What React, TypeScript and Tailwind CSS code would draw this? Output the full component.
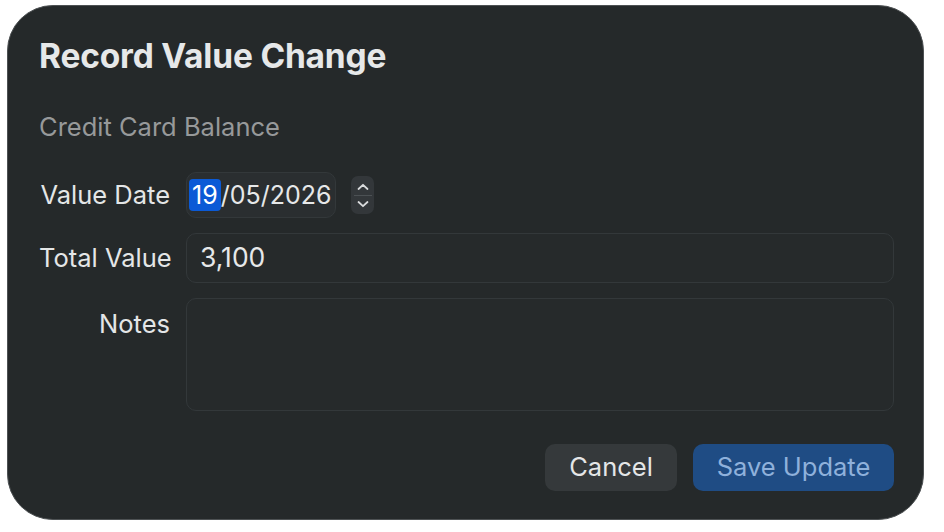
function DateStepper() {
  return (
    <div className="flex h-[38px] w-[23px] flex-col items-center justify-center rounded-[7px] bg-[#33373a] text-[#d9dbdc]">
      <svg width="14" height="10" viewBox="0 0 14 10" fill="none" stroke="currentColor" strokeWidth="1.8" strokeLinecap="round" strokeLinejoin="round">
        <path d="M2.5 7 7 2.8 11.5 7" />
      </svg>
      <div className="my-[3px] h-px w-[18px] bg-[#4c5154]" />
      <svg width="14" height="10" viewBox="0 0 14 10" fill="none" stroke="currentColor" strokeWidth="1.8" strokeLinecap="round" strokeLinejoin="round">
        <path d="M2.5 3 7 7.2 11.5 3" />
      </svg>
    </div>
  )
}

export default function App() {
  return (
    <div
      className="h-[532px] w-[944px] bg-white pl-[7px] pt-[5px]"
      style={{ fontFamily: 'Inter, "Noto Sans", sans-serif' }}
    >
      <section className="flex h-[515px] w-[917px] flex-col rounded-[46px] border border-[#4d5153] bg-[#25292a] pl-[31px] pr-[29px] pt-[31px] text-[#e4e6e7]">
        <h1 className="m-0 text-[33.5px] font-bold leading-[38px] tracking-[-0.2px] text-[#e6e8e9]">Record Value Change</h1>
        <p className="m-0 mt-[37px] text-[25.5px] leading-[30px] text-[#97999a]">Credit Card Balance</p>

        <div className="mt-[30px] grid grid-cols-[131px_1fr] gap-x-[16px] gap-y-[15px]">
          <label className="self-center whitespace-nowrap text-right text-[25.5px] leading-[30px]">Value Date</label>
          <div className="flex items-center gap-[15px]">
            <div className="flex h-[46px] w-[150px] items-center rounded-[10px] border border-[#33383a] bg-[#2a2e30] pl-[2px] text-[25px] leading-[32px] text-[#e6e8e9]">
              <span className="rounded-[4px] bg-[#0b5ad6] px-[3px] text-white">19</span>
              <span className="whitespace-nowrap">/05/2026</span>
            </div>
            <DateStepper />
          </div>

          <label className="self-center whitespace-nowrap text-right text-[25.5px] leading-[30px]">Total Value</label>
          <div className="flex h-[50px] items-center rounded-[10px] border border-[#33383a] bg-[#262a2b] px-[13px] text-[26.5px] text-[#e6e8e9]">
            3,100
          </div>

          <label className="pt-[11px] text-right text-[25.5px] leading-[30px]">Notes</label>
          <div className="h-[113px] rounded-[10px] border border-[#33383a] bg-[#262a2b]" />
        </div>

        <div className="mt-[33px] flex justify-end gap-[16px]">
          <button
            type="button"
            className="h-[47px] w-[132px] rounded-[10px] bg-[#35393b] text-[25.5px] text-[#e4e6e7]"
          >
            Cancel
          </button>
          <button
            type="button"
            className="h-[47px] w-[201px] rounded-[10px] bg-[#1f4c84] text-[25.5px] text-[#8fb1db]"
          >
            Save Update
          </button>
        </div>
      </section>
    </div>
  )
}
